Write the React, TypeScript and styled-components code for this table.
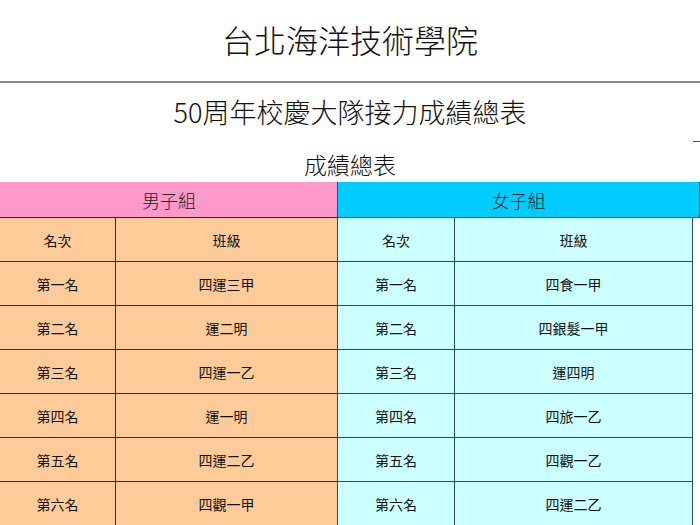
import React, { FunctionComponent } from 'react';
import styled, { createGlobalStyle, css } from 'styled-components';

const GlobalStyle = createGlobalStyle`
  html, body {
    margin: 0;
    padding: 0;
    background: #fff;
    overflow: hidden;
  }

  body {
    font-family: 'Noto Sans CJK TC', 'Liberation Sans', sans-serif;
    color: #111;
  }
`;

const Page = styled.div`
  width: 700px;
  display: flex;
  flex-direction: column;
`;

const SchoolTitle = styled.h1`
  margin: 0;
  height: 78px;
  padding-bottom: 3px;
  display: flex;
  align-items: center;
  justify-content: center;
  font-size: 32px;
  font-weight: 300;
  color: #111;
`;

const Rule = styled.hr`
  margin: 0;
  border: none;
  height: 2px;
  background: #8a8a8a;
`;

const EventTitle = styled.h2`
  position: relative;
  margin: 0;
  height: 56px;
  padding-bottom: 4px;
  display: flex;
  align-items: center;
  justify-content: center;
  font-size: 27px;
  font-weight: 300;
  color: #111;
`;

// stray tick mark at the right edge of the page
const Tick = styled.span`
  position: absolute;
  right: 0;
  bottom: 1px;
  width: 7px;
  height: 1px;
  background: #555;
`;

const TableTitle = styled.h3`
  margin: 0;
  height: 37px;
  padding-top: 2px;
  display: flex;
  align-items: center;
  justify-content: center;
  font-size: 23px;
  font-weight: 300;
  color: #111;
`;

const Board = styled.div`
  display: grid;
  grid-template-columns: 338px 362px;
  align-items: start;
`;

type Tone = 'boys' | 'girls';

const tones = {
  boys: { head: '#ff99cc', body: '#ffcc99', line: '#3d2816' },
  girls: { head: '#00ccff', body: '#ccffff', line: '#2c4a55' },
};

const Group = styled.section<{ $tone: Tone }>`
  display: flex;
  flex-direction: column;
  ${({ $tone }) =>
    $tone === 'girls' &&
    css`
      border-left: 1px solid ${tones.girls.line};
      margin-left: -1px;
    `}
`;

const GroupHead = styled.div<{ $tone: Tone }>`
  height: 35px;
  display: flex;
  align-items: center;
  justify-content: center;
  background: ${({ $tone }) => tones[$tone].head};
  border-bottom: 1px solid ${({ $tone }) => tones[$tone].line};
  border-right: ${({ $tone }) => ($tone === 'girls' ? `1px solid ${tones.girls.line}` : 'none')};
  font-size: 18px;
  font-weight: 300;
  color: #222;
`;

const Rows = styled.div<{ $tone: Tone; $width: number }>`
  width: ${({ $width }) => $width}px;
  display: flex;
  flex-direction: column;
  background: ${({ $tone }) => tones[$tone].body};
  border-right: 1px solid ${({ $tone }) => tones[$tone].line};
  box-sizing: border-box;
`;

const Row = styled.div<{ $tone: Tone; $rankWidth: number }>`
  height: 44px;
  display: grid;
  grid-template-columns: ${({ $rankWidth }) => $rankWidth}px 1fr;
  border-bottom: 1px solid ${({ $tone }) => tones[$tone].line};
  box-sizing: border-box;
`;

const Cell = styled.div<{ $tone: Tone; $divider?: boolean }>`
  display: flex;
  align-items: center;
  justify-content: center;
  font-size: 14px;
  color: #111;
  border-right: ${({ $divider, $tone }) => ($divider ? `1px solid ${tones[$tone].line}` : 'none')};
`;

interface Entry {
  rank: string;
  team: string;
}

const RANKS = ['第一名', '第二名', '第三名', '第四名', '第五名', '第六名'];

const BOYS: Entry[] = ['四運三甲', '運二明', '四運一乙', '運一明', '四運二乙', '四觀一甲'].map((team, i) => ({
  rank: RANKS[i],
  team,
}));

const GIRLS: Entry[] = ['四食一甲', '四銀髮一甲', '運四明', '四旅一乙', '四觀一乙', '四運二乙'].map((team, i) => ({
  rank: RANKS[i],
  team,
}));

interface GroupProps {
  tone: Tone;
  title: string;
  entries: Entry[];
  width: number;
  rankWidth: number;
}

const ResultGroup: FunctionComponent<GroupProps> = ({ tone, title, entries, width, rankWidth }) => (
  <Group $tone={tone}>
    <GroupHead $tone={tone}>{title}</GroupHead>
    <Rows $tone={tone} $width={width}>
      <Row $tone={tone} $rankWidth={rankWidth}>
        <Cell $tone={tone} $divider>
          名次
        </Cell>
        <Cell $tone={tone}>班級</Cell>
      </Row>
      {entries.map((entry) => (
        <Row key={entry.rank} $tone={tone} $rankWidth={rankWidth}>
          <Cell $tone={tone} $divider>
            {entry.rank}
          </Cell>
          <Cell $tone={tone}>{entry.team}</Cell>
        </Row>
      ))}
    </Rows>
  </Group>
);

const App: FunctionComponent = () => (
  <>
    <GlobalStyle />
    <Page>
      <SchoolTitle>台北海洋技術學院</SchoolTitle>
      <Rule />
      <EventTitle>
        50周年校慶大隊接力成績總表
        <Tick />
      </EventTitle>
      <TableTitle>成績總表</TableTitle>
      <Board>
        <ResultGroup tone="boys" title="男子組" entries={BOYS} width={338} rankWidth={116} />
        <ResultGroup tone="girls" title="女子組" entries={GIRLS} width={355} rankWidth={117} />
      </Board>
    </Page>
  </>
);

export default App;
